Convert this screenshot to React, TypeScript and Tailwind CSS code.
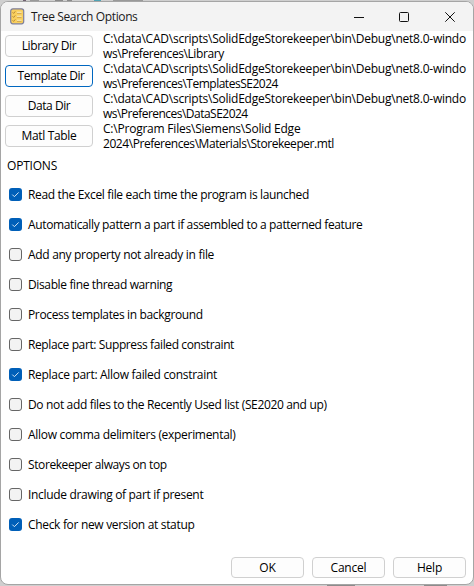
import React from "react";

const dirs = [
  {
    label: "Library Dir",
    track: "tracking-[-0.4px]",
    lines: [
      { text: "C:\\data\\CAD\\scripts\\SolidEdgeStorekeeper\\bin\\Debug\\net8.0-windo", track: "tracking-[-0.235px]" },
      { text: "ws\\Preferences\\Library", track: "tracking-[-0.41px]" },
    ],
  },
  {
    label: "Template Dir",
    active: true,
    track: "tracking-[-0.45px]",
    lines: [
      { text: "C:\\data\\CAD\\scripts\\SolidEdgeStorekeeper\\bin\\Debug\\net8.0-windo", track: "tracking-[-0.235px]" },
      { text: "ws\\Preferences\\TemplatesSE2024", track: "tracking-[-0.49px]" },
    ],
  },
  {
    label: "Data Dir",
    track: "tracking-[-0.45px]",
    lines: [
      { text: "C:\\data\\CAD\\scripts\\SolidEdgeStorekeeper\\bin\\Debug\\net8.0-windo", track: "tracking-[-0.235px]" },
      { text: "ws\\Preferences\\DataSE2024", track: "tracking-[-0.52px]" },
    ],
  },
  {
    label: "Matl Table",
    track: "tracking-[-0.35px]",
    lines: [
      { text: "C:\\Program Files\\Siemens\\Solid Edge", track: "tracking-[-0.22px]" },
      { text: "2024\\Preferences\\Materials\\Storekeeper.mtl", track: "tracking-[-0.44px]" },
    ],
  },
];

const options = [
  { text: "Read the Excel file each time the program is launched", on: true, track: "tracking-[-0.34px]" },
  { text: "Automatically pattern a part if assembled to a patterned feature", on: true, track: "tracking-[-0.36px]" },
  { text: "Add any property not already in file", on: false, track: "tracking-[-0.31px]" },
  { text: "Disable fine thread warning", on: false, track: "tracking-[-0.37px]" },
  { text: "Process templates in background", on: false, track: "tracking-[-0.35px]" },
  { text: "Replace part: Suppress failed constraint", on: false, track: "tracking-[-0.39px]" },
  { text: "Replace part: Allow failed constraint", on: true, track: "tracking-[-0.3px]" },
  { text: "Do not add files to the Recently Used list (SE2020 and up)", on: false, track: "tracking-[-0.345px]" },
  { text: "Allow comma delimiters (experimental)", on: false, track: "tracking-[-0.3px]" },
  { text: "Storekeeper always on top", on: false, track: "tracking-[-0.4px]" },
  { text: "Include drawing of part if present", on: false, track: "tracking-[-0.32px]" },
  { text: "Check for new version at statup", on: true, track: "tracking-[-0.32px]" },
];

function AppIcon() {
  return (
    <svg width="15" height="17" viewBox="0 0 15 17" className="shrink-0">
      <rect x="0.7" y="0.8" width="13" height="15" rx="2.2" fill="#f9cf5d" stroke="#7d7f9c" strokeWidth="1.2" />
      <path d="M2.6 4.4l1 1 1.7-2M2.6 8.4l1 1 1.7-2M2.6 12.4l1 1 1.7-2" fill="none" stroke="#a0762f" strokeWidth="0.8" />
      <path d="M7 4.5h4.5M7 8.5h4.5M7 12.5h4.5" stroke="#fff0b8" strokeWidth="1.6" />
      <path d="M7 5.3h4.5M7 9.3h4.5M7 13.3h4.5" stroke="#b98b3c" strokeWidth="0.7" />
    </svg>
  );
}

function CheckBox({ on }: { on: boolean }) {
  return on ? (
    <span className="mb-px flex size-[13px] shrink-0 items-center justify-center rounded-[3px] bg-[#005fb8]">
      <svg width="13" height="13" viewBox="0 0 13 13">
        <path d="M3.3 6.6l2.1 2.1 4.3-4.3" fill="none" stroke="#d5e7f7" strokeWidth="1" />
      </svg>
    </span>
  ) : (
    <span className="mb-px size-[13px] shrink-0 rounded-[3px] border border-[#666666] bg-[#f3f3f3]" />
  );
}

export default function App() {
  return (
    <div className="h-[586px] w-[474px] overflow-hidden bg-[#cfcfcf] font-['Open_Sans','Noto_Sans',sans-serif] text-[12px] whitespace-nowrap text-black">
      <div className="flex h-px items-center gap-[4px] pl-[23px]">
        <span className="h-px w-[3px] bg-[#6f5f70]" />
        <span className="h-px w-[9px] bg-[#999]" />
        <span className="ml-[12px] h-px w-[8px] bg-[#8a8a8a]" />
        <span className="h-px w-[5px] bg-[#8a8a8a]" />
        <span className="ml-[18px] h-px w-[7px] bg-[#4fa3b5]" />
        <span className="ml-[8px] h-px w-[30px] bg-[#999]" />
      </div>
      <div className="flex h-[584px] w-[474px] flex-col overflow-hidden rounded-[8px] border border-[#a5a5a5] bg-white">
        <header className="flex h-[29px] shrink-0 items-center bg-[#f3f3f3] pl-[9px]">
          <AppIcon />
          <span className="ml-[6px] leading-[28px] tracking-[-0.37px] text-[#1a1a1a]">Tree Search Options</span>
          <svg className="ml-auto mr-[17px]" width="102" height="12" viewBox="0 0 102 12">
            <path d="M0 6.5h10" stroke="#111" />
            <rect x="45.5" y="1.5" width="9" height="9" rx="1" fill="none" stroke="#111" />
            <path d="M91.3 1.3l9.4 9.4M100.7 1.3l-9.4 9.4" stroke="#111" />
          </svg>
        </header>
        <section className="flex flex-col pl-1">
          {dirs.map((d) => (
            <div key={d.label} className="flex h-[30px]">
              <button
                className={`mt-[4px] h-[22px] w-[88px] shrink-0 rounded-[4px] border bg-[#fdfdfd] leading-[20px] ${d.track} ${d.active ? "border-[#0067c0] pl-[4px]" : "border-[#d0d0d0]"}`}
              >
                {d.label}
              </button>
              <div className="ml-[10px]">
                {d.lines.map((l) => (
                  <p key={l.text} className={`leading-[15px] ${l.track}`}>{l.text}</p>
                ))}
              </div>
            </div>
          ))}
        </section>
        <h2 className="mt-[7px] pl-[6px] leading-[16px] tracking-[-0.2px]">OPTIONS</h2>
        <ul className="mt-[6px] pl-[8px]">
          {options.map((o) => (
            <li key={o.text} className="flex h-[30px] items-center gap-[6px]">
              <CheckBox on={o.on} />
              <span className={o.track}>{o.text}</span>
            </li>
          ))}
        </ul>
        <footer className="mt-auto mb-[6px] flex justify-end gap-[8px] pr-[7px]">
          {["OK", "Cancel", "Help"].map((b) => (
            <button key={b} className="h-[21px] w-[73px] rounded-[4px] border border-[#d0d0d0] bg-[#fdfdfd] leading-[19px] tracking-[-0.2px]">
              {b}
            </button>
          ))}
        </footer>
      </div>
      <div className="flex h-px justify-end gap-[69px] pr-[27px]">
        <span className="h-px w-[28px] bg-[#8c8c8c]" />
        <span className="h-px w-[23px] bg-[#8c8c8c]" />
      </div>
    </div>
  );
}
